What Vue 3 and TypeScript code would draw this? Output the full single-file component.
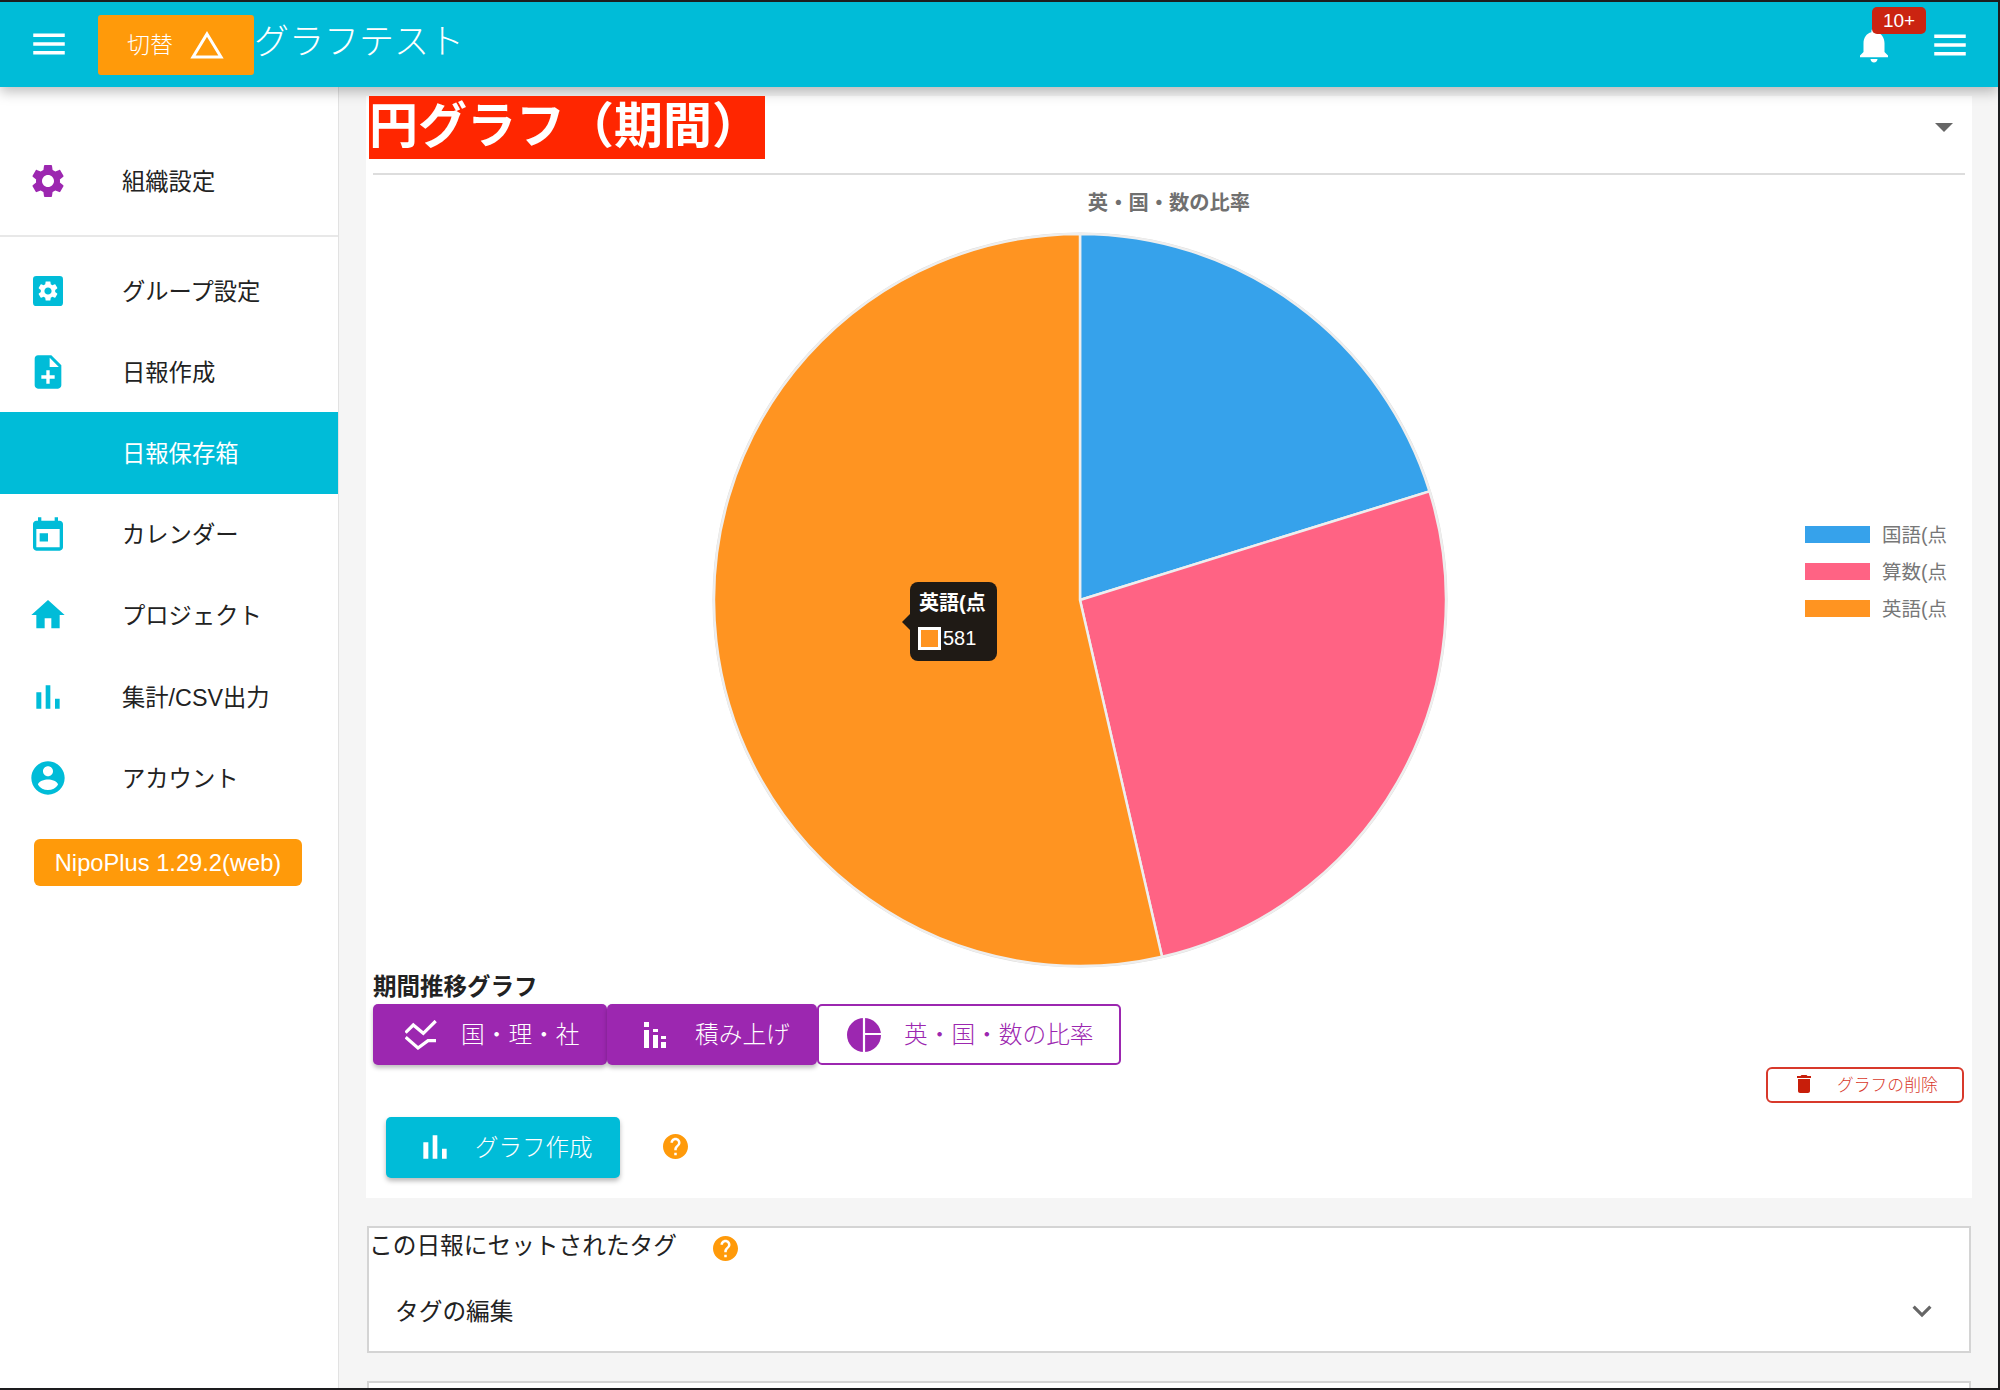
<script setup lang="ts">
interface NavItem {
  label: string
  icon: string
  active?: boolean
}

const P = {
  gear: 'M19.14 12.94c.04-.3.06-.61.06-.94 0-.32-.02-.64-.07-.94l2.03-1.58c.18-.14.23-.41.12-.61l-1.92-3.32c-.12-.22-.37-.29-.59-.22l-2.39.96c-.5-.38-1.03-.7-1.62-.94l-.36-2.54c-.04-.24-.24-.41-.48-.41h-3.84c-.24 0-.43.17-.47.41l-.36 2.54c-.59.24-1.13.57-1.62.94l-2.39-.96c-.22-.08-.47 0-.59.22L2.74 8.87c-.12.21-.08.47.12.61l2.03 1.58c-.05.3-.09.63-.09.94s.02.64.07.94l-2.03 1.58c-.18.14-.23.41-.12.61l1.92 3.32c.12.22.37.29.59.22l2.39-.96c.5.38 1.03.7 1.62.94l.36 2.54c.05.24.24.41.48.41h3.84c.24 0 .44-.17.47-.41l.36-2.54c.59-.24 1.13-.56 1.62-.94l2.39.96c.22.08.47 0 .59-.22l1.92-3.32c.12-.22.07-.47-.12-.61l-2.01-1.58zM12 15.6c-1.98 0-3.6-1.62-3.6-3.6s1.62-3.6 3.6-3.6 3.6 1.62 3.6 3.6-1.62 3.6-3.6 3.6z',
  menu: 'M3 18h18v-2H3v2zm0-5h18v-2H3v2zm0-7v2h18V6H3z',
  bell: 'M12 22c1.1 0 2-.9 2-2h-4c0 1.1.89 2 2 2zm6-6v-5c0-3.07-1.64-5.64-4.5-6.32V4c0-.83-.67-1.5-1.5-1.5s-1.5.67-1.5 1.5v.68C7.63 5.36 6 7.92 6 11v5l-2 2v1h16v-1l-2-2z',
  bars: 'M5 9.2h3V19H5zM10.6 5h2.8v14h-2.8zm5.6 8H19v6h-2.8z',
  noteAdd: 'M14 2H6c-1.1 0-1.99.9-1.99 2L4 20c0 1.1.89 2 1.99 2H18c1.1 0 2-.9 2-2V8l-6-6zm2 14h-3v3h-2v-3H8v-2h3v-3h2v3h3v2zm-3-7V3.5L18.5 9H13z',
  calendar: 'M19 4h-1V2h-2v2H8V2H6v2H5C3.9 4 3 4.9 3 6v14c0 1.1.9 2 2 2h14c1.1 0 2-.9 2-2V6c0-1.1-.9-2-2-2zm0 16H5V9h14v11zM7 11.5h5v5H7z',
  home: 'M10 20v-6h4v6h5v-8h3L12 3 2 12h3v8z',
  account: 'M12 2C6.48 2 2 6.48 2 12s4.48 10 10 10 10-4.48 10-10S17.52 2 12 2zm0 3c1.66 0 3 1.34 3 3s-1.34 3-3 3-3-1.34-3-3 1.34-3 3-3zm0 14.2c-2.5 0-4.71-1.28-6-3.22.03-1.99 4-3.08 6-3.08 1.99 0 5.97 1.09 6 3.08-1.29 1.94-3.5 3.22-6 3.22z',
  trash: 'M6 19c0 1.1.9 2 2 2h8c1.1 0 2-.9 2-2V7H6v12zM19 4h-3.5l-1-1h-5l-1 1H5v2h14V4z',
  help: 'M12 2C6.48 2 2 6.48 2 12s4.48 10 10 10 10-4.48 10-10S17.52 2 12 2zm1 17h-2v-2h2v2zm2.07-7.75l-.9.92C13.45 12.9 13 13.5 13 15h-2v-.5c0-1.1.45-2.1 1.17-2.83l1.24-1.26c.37-.36.59-.86.59-1.41 0-1.1-.9-2-2-2s-2 .9-2 2H8c0-2.21 1.79-4 4-4s4 1.79 4 4c0 .88-.36 1.68-.93 2.25z',
  chevron: 'M7.41 8.59 12 13.17l4.59-4.58L18 10l-6 6-6-6z',
}

const nav: NavItem[] = [
  { label: 'グループ設定', icon: 'groupGear' },
  { label: '日報作成', icon: P.noteAdd },
  { label: '日報保存箱', icon: '', active: true },
  { label: 'カレンダー', icon: P.calendar },
  { label: 'プロジェクト', icon: P.home },
  { label: '集計/CSV出力', icon: P.bars },
  { label: 'アカウント', icon: P.account },
]

const COLORS = { blue: '#36a2eb', pink: '#ff6384', orange: '#ff9421' }
const slices = [
  { label: '国語(点', value: 219, color: COLORS.blue },
  { label: '算数(点', value: 284, color: COLORS.pink },
  { label: '英語(点', value: 581, color: COLORS.orange },
]
const R = 366
const C = 368
const total = slices.reduce((s, d) => s + d.value, 0)
let acc = 0
const arcs = slices.map((d) => {
  const a0 = (acc / total) * Math.PI * 2
  acc += d.value
  const a1 = (acc / total) * Math.PI * 2
  const x0 = C + R * Math.sin(a0)
  const y0 = C - R * Math.cos(a0)
  const x1 = C + R * Math.sin(a1)
  const y1 = C - R * Math.cos(a1)
  const large = a1 - a0 > Math.PI ? 1 : 0
  return { color: d.color, d: `M${C} ${C}L${x0} ${y0}A${R} ${R} 0 ${large} 1 ${x1} ${y1}Z` }
})
</script>

<template>
  <div class="root">
    <header class="topbar">
      <svg class="menu-l" viewBox="0 0 24 24"><path :d="P.menu" /></svg>
      <button class="switch">
        <span>切替</span>
        <svg width="36" height="28" viewBox="0 0 36 28"><path d="M18 3 32 26H4Z" fill="none" stroke="#fff" stroke-width="3" /></svg>
      </button>
      <div class="app-title">グラフテスト</div>
      <div class="bell">
        <svg viewBox="0 0 24 24"><path :d="P.bell" /></svg>
        <span class="badge">10+</span>
      </div>
      <svg class="menu-r" viewBox="0 0 24 24"><path :d="P.menu" /></svg>
    </header>

    <div class="body">
      <aside class="sidebar">
        <div class="nav-row org">
          <svg class="nav-ico purple" viewBox="0 0 24 24"><path :d="P.gear" /></svg>
          <span class="nav-label">組織設定</span>
        </div>
        <div v-for="item in nav" :key="item.label" class="nav-row" :class="{ active: item.active }">
          <svg v-if="item.icon === 'groupGear'" class="nav-ico" viewBox="0 0 24 24">
            <rect x="3" y="3" width="18" height="18" rx="2" />
            <path :d="P.gear" fill="#fff" transform="translate(4.8 4.8) scale(.6)" />
          </svg>
          <svg v-else-if="item.icon" class="nav-ico" viewBox="0 0 24 24"><path :d="item.icon" /></svg>
          <span v-else class="nav-ico"></span>
          <span class="nav-label">{{ item.label }}</span>
        </div>
        <div class="version">NipoPlus 1.29.2(web)</div>
      </aside>

      <main class="main">
        <section class="card">
          <div class="card-head">
            <h1 class="red-title">円グラフ（期間）</h1>
            <span class="caret"></span>
          </div>
          <div class="divider"></div>
          <div class="chart-title">英・国・数の比率</div>
          <div class="chart-row">
            <div class="pie-box">
              <svg class="pie" width="736" height="736" viewBox="0 0 736 736">
                <circle :cx="C" :cy="C" :r="R + 1.5" fill="#dedcda" />
                <path v-for="a in arcs" :key="a.color" :d="a.d" :fill="a.color" stroke="#eeeeee" stroke-width="2.5" />
              </svg>
              <div class="tooltip">
                <div class="tt-title">英語(点</div>
                <div class="tt-row"><i class="tt-swatch"></i><span>581</span></div>
              </div>
            </div>
            <ul class="legend">
              <li v-for="s in slices" :key="s.label">
                <i :style="{ background: s.color }"></i>{{ s.label }}
              </li>
            </ul>
          </div>

          <div class="section-label">期間推移グラフ</div>
          <div class="tabs">
            <button class="tab tab-1">
              <svg width="32" height="30" viewBox="0 0 32 30" fill="none" stroke="#fff" stroke-width="3.2">
                <path d="M0.5 12.7 8.3 5 18.3 13.3 30.7 1" />
                <path d="M0.7 17.3 13 28 23 20.7H31" />
              </svg>
              <span>国・理・社</span>
            </button>
            <button class="tab tab-2">
              <svg width="22" height="26" viewBox="0 0 22 26" fill="#fff">
                <path d="M0 0h5v5H0zM0 8h5v18H0zM9 7h5v3H9zM9 13h5v13H9zM17 14h5v3h-5zM17 20h5v6h-5z" />
              </svg>
              <span>積み上げ</span>
            </button>
            <button class="tab tab-3">
              <svg width="34" height="34" viewBox="0 0 34 34">
                <circle cx="17" cy="17" r="17" fill="#9c27b0" />
                <path d="M17 0V34M17 16H34" stroke="#fff" stroke-width="2.2" />
              </svg>
              <span>英・国・数の比率</span>
            </button>
          </div>

          <div class="delete-row">
            <button class="delete">
              <svg width="24" height="24" viewBox="0 0 24 24"><path :d="P.trash" /></svg>
              <span>グラフの削除</span>
            </button>
          </div>

          <div class="create-row">
            <button class="create">
              <svg width="40" height="40" viewBox="0 0 24 24"><path :d="P.bars" /></svg>
              <span>グラフ作成</span>
            </button>
            <svg class="help" viewBox="2 2 20 20"><circle cx="12" cy="12" r="10" fill="#fff" /><path :d="P.help" /></svg>
          </div>
        </section>

        <section class="tag-card">
          <div class="tag-head">
            <span>この日報にセットされたタグ</span>
            <svg class="help" viewBox="2 2 20 20"><circle cx="12" cy="12" r="10" fill="#fff" /><path :d="P.help" /></svg>
          </div>
          <div class="tag-row">
            <span>タグの編集</span>
            <svg width="38" height="38" viewBox="0 0 24 24"><path :d="P.chevron" /></svg>
          </div>
        </section>

        <section class="next-card"></section>
      </main>
    </div>
  </div>
</template>

<style scoped>
.root {
  box-sizing: border-box;
  width: 2000px;
  height: 1390px;
  overflow: hidden;
  display: flex;
  flex-direction: column;
  background: #f5f5f5;
  border-top: 2px solid #1d1d1f;
  border-right: 2px solid #1d1d1f;
  border-bottom: 2px solid #1d1d1f;
  font-family: "Liberation Sans", "Noto Sans CJK JP", sans-serif;
  color: #222;
}
button {
  font: inherit;
  border: 0;
  cursor: pointer;
}
.topbar {
  position: relative;
  z-index: 2;
  flex: none;
  height: 85px;
  display: flex;
  align-items: center;
  background: #00bcd8;
  box-shadow: 0 5px 12px rgba(0, 0, 0, 0.25);
  color: #fff;
}
.topbar svg {
  fill: #fff;
}
.menu-l {
  width: 42px;
  height: 42px;
  margin: -2px 28px 0 28px;
}
.switch {
  display: flex;
  align-items: center;
  justify-content: center;
  gap: 16px;
  width: 156px;
  height: 60px;
  margin-top: 1px;
  padding-right: 6px;
  border-radius: 3px;
  background: #ff9a0a;
  color: #fff;
  font-size: 23px;
  font-weight: 300;
}
.switch span {
  padding-bottom: 4px;
}
.app-title {
  margin-left: 0;
  margin-top: -13px;
  font-size: 35px;
  font-weight: 300;
}
.bell {
  position: relative;
  margin-left: auto;
  width: 42px;
  height: 42px;
  margin-right: 34px;
  margin-top: 0;
}
.bell svg {
  display: block;
  width: 42px;
  height: 42px;
}
.badge {
  position: absolute;
  left: 19px;
  top: -16.5px;
  width: 54px;
  height: 27px;
  border-radius: 5px;
  background: #cb2411;
  color: #fff;
  font-size: 19px;
  line-height: 27px;
  text-align: center;
}
.menu-r {
  width: 42px;
  height: 42px;
  margin-right: 27px;
}
.body {
  flex: 1;
  display: flex;
  min-height: 0;
}
.sidebar {
  flex: none;
  box-sizing: border-box;
  width: 339px;
  padding-top: 53px;
  background: #fff;
  border-right: 1px solid #e2e2e2;
}
.nav-row {
  display: flex;
  align-items: center;
  height: 81.2px;
  font-size: 23.3px;
  color: #222;
}
.nav-label {
  padding-bottom: 2px;
}
.nav-row.org {
  height: 82px;
  margin-bottom: 28px;
  position: relative;
}
.nav-row.org::after {
  content: "";
  position: absolute;
  left: 0;
  right: 0;
  bottom: -15px;
  height: 2px;
  background: #e8e8e8;
}
.nav-ico {
  flex: none;
  display: block;
  width: 40px;
  height: 40px;
  margin-left: 28px;
  margin-right: 54px;
  fill: #00bcd8;
}
.nav-ico.purple {
  fill: #9c27b0;
}
.nav-row.active {
  background: #00bcd8;
  color: #fff;
}
.version {
  width: 268px;
  height: 47px;
  margin: 21px 0 0 34px;
  border-radius: 6px;
  background: #ff9a0a;
  color: #fff;
  font-size: 23.7px;
  line-height: 49px;
  text-align: center;
}
.main {
  flex: 1;
  min-width: 0;
  padding: 9px 26px 0 27px;
}
.card {
  background: #fff;
  padding-bottom: 20px;
}
.card-head {
  display: flex;
  justify-content: space-between;
  align-items: flex-start;
  padding-left: 3px;
  height: 77px;
}
.red-title {
  position: relative;
  z-index: 3;
  margin: 0;
  box-sizing: border-box;
  width: 396px;
  height: 63px;
  background: #ff2600;
  color: #fff;
  font-size: 49px;
  font-weight: 700;
  line-height: 60px;
  white-space: nowrap;
}
.caret {
  margin: 27px 19px 0 0;
  width: 0;
  height: 0;
  border-left: 9px solid transparent;
  border-right: 9px solid transparent;
  border-top: 9px solid #666;
}
.divider {
  height: 2px;
  margin: 0 7px;
  background: #ddd;
}
.chart-title {
  margin-top: 14px;
  height: 28px;
  line-height: 28px;
  text-align: center;
  font-size: 20.3px;
  font-weight: 700;
  color: #707070;
}
.chart-row {
  display: flex;
  margin: 15px 7px 0;
  height: 736px;
}
.pie-box {
  position: relative;
  flex: none;
  width: 1414px;
  display: flex;
  justify-content: center;
}
.pie {
  display: block;
}
.tooltip {
  position: absolute;
  left: 537px;
  top: 350px;
  box-sizing: border-box;
  width: 87px;
  height: 79px;
  padding: 7px 9px;
  border-radius: 8px;
  background: #1f1a15;
  color: #fff;
}
.tooltip::before {
  content: "";
  position: absolute;
  left: -8px;
  top: 32px;
  border-top: 8px solid transparent;
  border-bottom: 8px solid transparent;
  border-right: 8px solid #1f1a15;
}
.tt-title {
  font-size: 20px;
  font-weight: 700;
  line-height: 28px;
  white-space: nowrap;
}
.tt-row {
  display: flex;
  align-items: center;
  gap: 2px;
  margin-top: 10px;
  margin-left: -1px;
  font-size: 20px;
  line-height: 23px;
}
.tt-swatch {
  display: block;
  box-sizing: border-box;
  width: 23px;
  height: 23px;
  border: 3px solid #fff;
  background: #ff9421;
}
.legend {
  list-style: none;
  margin: 0 0 0 18px;
  padding: 283px 0 0;
  width: 160px;
  font-size: 19.5px;
  color: #777;
}
.legend li {
  display: flex;
  align-items: center;
  height: 37px;
  white-space: nowrap;
}
.legend i {
  display: block;
  width: 65px;
  height: 17px;
  margin-top: 1px;
  margin-right: 12px;
}
.section-label {
  margin: 4px 0 0 7px;
  height: 32px;
  line-height: 31px;
  font-size: 23.5px;
  font-weight: 700;
  color: #222;
}
.tabs {
  display: flex;
  margin-left: 7px;
  height: 61px;
}
.tab {
  box-sizing: border-box;
  display: flex;
  align-items: center;
  height: 61px;
  border-radius: 5px;
  background: #9c27b0;
  color: #fff;
  font-size: 23.7px;
  font-weight: 300;
  white-space: nowrap;
  box-shadow: 0 3px 4px rgba(0, 0, 0, 0.25);
}
.tab span {
  padding-bottom: 3px;
}
.tab-1 {
  width: 234px;
  padding-left: 32px;
  gap: 24px;
}
.tab-2 {
  width: 210px;
  padding-left: 37px;
  gap: 29px;
}
.tab-3 {
  width: 304px;
  padding-left: 28px;
  gap: 23px;
  background: #fff;
  color: #9c27b0;
  border: 2px solid #9c27b0;
  box-shadow: none;
}
.delete-row {
  display: flex;
  justify-content: flex-end;
  margin: 2px 8px 0 0;
}
.delete {
  box-sizing: border-box;
  display: flex;
  align-items: center;
  width: 198px;
  height: 36px;
  padding-left: 24px;
  gap: 21px;
  background: #fff;
  border: 2px solid #d8392b;
  border-radius: 6px;
  color: #d8392b;
  font-size: 16.8px;
  font-weight: 300;
  white-space: nowrap;
}
.delete span {
  padding-bottom: 3px;
}
.delete svg {
  fill: #c81e0a;
  margin-top: -2px;
}
.create-row {
  display: flex;
  align-items: center;
  margin: 14px 0 0 20px;
}
.create {
  display: flex;
  align-items: center;
  box-sizing: border-box;
  width: 234px;
  height: 61px;
  padding-left: 29px;
  gap: 20px;
  border-radius: 5px;
  background: #00bcd8;
  color: #fff;
  font-size: 23.5px;
  font-weight: 300;
  box-shadow: 0 3px 5px rgba(0, 0, 0, 0.28);
}
.create span {
  padding-bottom: 3px;
}
.create svg {
  fill: #fff;
  margin-top: -2px;
}
.help {
  display: block;
  width: 25px;
  height: 25px;
  fill: #ff9a0a;
}
.create-row .help {
  margin-left: 43px;
  margin-top: -2px;
}
.tag-card {
  box-sizing: border-box;
  height: 127px;
  margin: 28px 1px 0;
  background: #fff;
  border: 2px solid #d4d4d4;
}
.tag-head {
  display: flex;
  align-items: center;
  height: 32px;
  font-size: 23.7px;
}
.tag-head span {
  padding-bottom: 1px;
}
.tag-head .help {
  margin: 8px 0 0 36px;
}
.tag-row {
  display: flex;
  align-items: center;
  justify-content: space-between;
  height: 64px;
  margin-top: 18px;
  padding: 0 28px 0 26px;
  font-size: 23.7px;
}
.tag-row span {
  padding-bottom: 0;
}
.tag-row svg {
  fill: #666;
  margin-top: 2px;
}
.next-card {
  box-sizing: border-box;
  height: 60px;
  margin: 28px 1px 0;
  background: #fff;
  border: 2px solid #d4d4d4;
}
</style>
